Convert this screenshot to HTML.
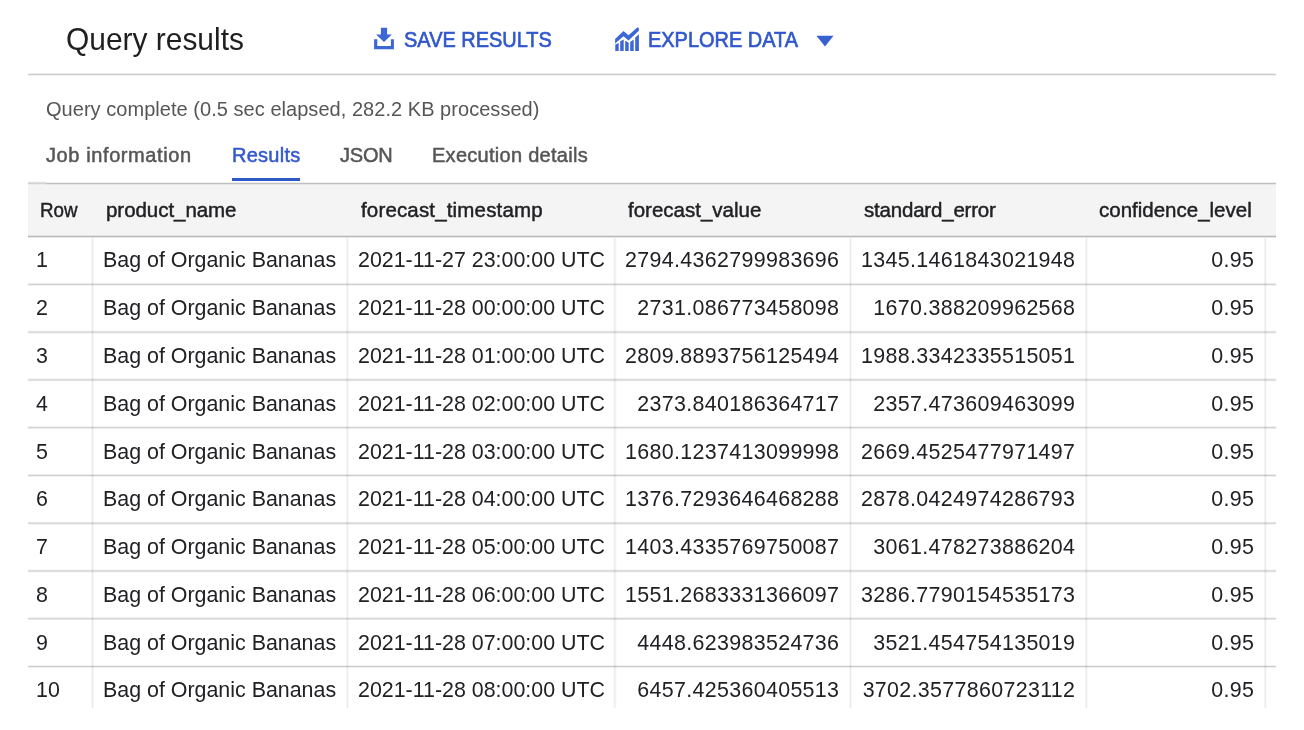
<!DOCTYPE html>
<html><head><meta charset="utf-8"><style>
*{margin:0;padding:0;box-sizing:border-box}
html,body{width:1304px;height:730px;overflow:hidden;background:#fff}
body{position:relative;font-family:"Liberation Sans",sans-serif;color:#202124}
.a{position:absolute;white-space:nowrap}
.m{position:absolute;mix-blend-mode:multiply}
.w{position:absolute;left:0;top:0;width:1304px;height:730px;will-change:transform}
.t{font-size:31.3px;line-height:32px;color:#1f1f1f;transform:scaleX(0.956);transform-origin:0 0}
.btn{font-size:22.8px;line-height:22px;transform:scaleX(0.875);transform-origin:0 0;color:#3358cc;-webkit-text-stroke:0.7px #3358cc}
.sub{font-size:20px;line-height:20px;color:#565656;letter-spacing:0.04px}
.tab{font-size:20px;line-height:20px;color:#565656;-webkit-text-stroke:0.5px #565656}
.tab.on{color:#3358cc;-webkit-text-stroke:0.5px #3358cc}
.hl{position:absolute;background:#dadada}
.vl{position:absolute;background:#e8e8e8;width:1px;box-shadow:1px 0 0 #f3f3f3}
.h{font-size:20.5px;line-height:20px;color:#202124;-webkit-text-stroke:0.45px #202124}
.c{font-size:21.4px;line-height:21px;color:#202124}
.n{letter-spacing:0.34px}
.r{text-align:right}
</style></head>
<body><div class="w">
<div class="a t" style="left:66px;top:24px">Query results</div>
<svg class="a" style="left:372px;top:25px" width="26" height="26" viewBox="0 0 26 26"><path fill="#3d66d6" d="M8.9 2.85H15.1V9.4H19.9L12 17.1L4.1 9.4H8.9Z M2.1 14.2H5.3V21H18.9V14.2H21.9V24.2H2.1Z"/></svg>
<div class="a btn" style="left:404px;top:28.2px">SAVE RESULTS</div>
<svg class="a" style="left:612px;top:25px" width="30" height="28" viewBox="0 0 30 28"><g fill="#3d66d6"><path d="M3.1 14.0L11.5 5.9L16.5 10.2L25.0 2.7Q26.0 2.0 26.9 3.2V5.8L16.5 15.4L11.5 11.3L3.1 18.6Z"/><path d="M3.3 19.6L6.7 18.0V25.9H3.3Z"/><path d="M8.2 16.3L11.7 14.6V25.9H8.2Z"/><path d="M13.2 15.8L16.7 17.8V25.9H13.2Z"/><path d="M18.2 17.0L21.7 14.6V25.9H18.2Z"/><path d="M23.2 12.4L26.9 9.2V25.9H23.2Z"/></g></svg>
<div class="a btn" style="left:648px;top:28.2px">EXPLORE DATA</div>
<svg class="a" style="left:812px;top:32px" width="26" height="18" viewBox="0 0 26 18"><path fill="#3860cf" d="M4.4 3.7H21.5L13 14.5Z"/></svg>
<div class="m" style="left:28px;top:73px;width:1248px;height:1px;background:#ececec"></div>
<div class="m" style="left:28px;top:74px;width:1248px;height:1px;background:#cdcdcd"></div>
<div class="m" style="left:28px;top:75px;width:1248px;height:1px;background:#f1f1f1"></div>
<div class="a sub" style="left:46px;top:99px">Query complete (0.5 sec elapsed, 282.2 KB processed)</div>
<div class="a tab" style="left:46px;top:145px;letter-spacing:0.6px">Job information</div>
<div class="a tab on" style="left:232px;top:145px;letter-spacing:0.25px">Results</div>
<div class="a" style="left:232px;top:178px;width:68px;height:3px;background:#3059c8"></div>
<div class="a tab" style="left:340px;top:145px;letter-spacing:-0.2px">JSON</div>
<div class="a tab" style="left:432px;top:145px;letter-spacing:0.28px">Execution details</div>
<div class="a" style="left:28px;top:183px;width:1248px;height:54px;background:#f4f4f4"></div>
<div class="m" style="left:28px;top:181px;width:18px;height:1px;background:#f9f9f9"></div>
<div class="m" style="left:28px;top:182px;width:18px;height:1px;background:#e0e0e0"></div>
<div class="m" style="left:28px;top:183px;width:18px;height:1px;background:#dcdcdc"></div>
<div class="m" style="left:28px;top:184px;width:18px;height:1px;background:#f7f7f7"></div>
<div class="m" style="left:46px;top:182px;width:1230px;height:1px;background:#f0f0f0"></div>
<div class="m" style="left:46px;top:183px;width:1230px;height:1px;background:#c9c9c9"></div>
<div class="m" style="left:46px;top:184px;width:1230px;height:1px;background:#f0f0f0"></div>
<div class="m" style="left:28px;top:235px;width:1248px;height:1px;background:#eeeeee"></div>
<div class="m" style="left:28px;top:236px;width:1248px;height:1px;background:#c0c0c0"></div>
<div class="m" style="left:28px;top:237px;width:1248px;height:1px;background:#e8e8e8"></div>
<div class="a h" style="left:40px;top:200px;letter-spacing:0px;transform:scaleX(0.915);transform-origin:0 0">Row</div>
<div class="a h" style="left:106px;top:200px;letter-spacing:-0.05px">product_name</div>
<div class="a h" style="left:361px;top:200px;letter-spacing:0.16px">forecast_timestamp</div>
<div class="a h" style="left:628px;top:200px;letter-spacing:0px">forecast_value</div>
<div class="a h" style="left:864px;top:200px;letter-spacing:-0.2px">standard_error</div>
<div class="a h" style="left:1099px;top:200px;letter-spacing:0px">confidence_level</div>
<div class="m" style="left:91px;top:238px;width:1px;height:470px;background:#f9f9f9"></div>
<div class="m" style="left:92px;top:238px;width:1px;height:470px;background:#eaeaea"></div>
<div class="m" style="left:93px;top:238px;width:1px;height:470px;background:#f8f8f8"></div>
<div class="m" style="left:346px;top:238px;width:1px;height:470px;background:#f6f6f6"></div>
<div class="m" style="left:347px;top:238px;width:1px;height:470px;background:#ececec"></div>
<div class="m" style="left:348px;top:238px;width:1px;height:470px;background:#fafafa"></div>
<div class="m" style="left:613px;top:238px;width:1px;height:470px;background:#fbfbfb"></div>
<div class="m" style="left:614px;top:238px;width:1px;height:470px;background:#f0f0f0"></div>
<div class="m" style="left:615px;top:238px;width:1px;height:470px;background:#f2f2f2"></div>
<div class="m" style="left:616px;top:238px;width:1px;height:470px;background:#fcfcfc"></div>
<div class="m" style="left:849px;top:238px;width:1px;height:470px;background:#f9f9f9"></div>
<div class="m" style="left:850px;top:238px;width:1px;height:470px;background:#eaeaea"></div>
<div class="m" style="left:851px;top:238px;width:1px;height:470px;background:#f8f8f8"></div>
<div class="m" style="left:1085px;top:238px;width:1px;height:470px;background:#f5f5f5"></div>
<div class="m" style="left:1086px;top:238px;width:1px;height:470px;background:#ededed"></div>
<div class="m" style="left:1087px;top:238px;width:1px;height:470px;background:#fafafa"></div>
<div class="m" style="left:1264px;top:238px;width:1px;height:470px;background:#f5f5f5"></div>
<div class="m" style="left:1265px;top:238px;width:1px;height:470px;background:#ededed"></div>
<div class="m" style="left:1266px;top:238px;width:1px;height:470px;background:#fafafa"></div>
<div class="m" style="left:28px;top:282px;width:1248px;height:1px;background:#fdfdfd"></div>
<div class="m" style="left:28px;top:283px;width:1248px;height:1px;background:#ebebeb"></div>
<div class="m" style="left:28px;top:284px;width:1248px;height:1px;background:#d1d1d1"></div>
<div class="m" style="left:28px;top:285px;width:1248px;height:1px;background:#f3f3f3"></div>
<div class="m" style="left:28px;top:330px;width:1248px;height:1px;background:#fafafa"></div>
<div class="m" style="left:28px;top:331px;width:1248px;height:1px;background:#e3e3e3"></div>
<div class="m" style="left:28px;top:332px;width:1248px;height:1px;background:#dadada"></div>
<div class="m" style="left:28px;top:333px;width:1248px;height:1px;background:#f6f6f6"></div>
<div class="m" style="left:28px;top:378px;width:1248px;height:1px;background:#f6f6f6"></div>
<div class="m" style="left:28px;top:379px;width:1248px;height:1px;background:#dadada"></div>
<div class="m" style="left:28px;top:380px;width:1248px;height:1px;background:#e2e2e2"></div>
<div class="m" style="left:28px;top:381px;width:1248px;height:1px;background:#f9f9f9"></div>
<div class="m" style="left:28px;top:426px;width:1248px;height:1px;background:#f3f3f3"></div>
<div class="m" style="left:28px;top:427px;width:1248px;height:1px;background:#d2d2d2"></div>
<div class="m" style="left:28px;top:428px;width:1248px;height:1px;background:#ebebeb"></div>
<div class="m" style="left:28px;top:429px;width:1248px;height:1px;background:#fdfdfd"></div>
<div class="m" style="left:28px;top:474px;width:1248px;height:1px;background:#eeeeee"></div>
<div class="m" style="left:28px;top:475px;width:1248px;height:1px;background:#cecece"></div>
<div class="m" style="left:28px;top:476px;width:1248px;height:1px;background:#f2f2f2"></div>
<div class="m" style="left:28px;top:521px;width:1248px;height:1px;background:#fbfbfb"></div>
<div class="m" style="left:28px;top:522px;width:1248px;height:1px;background:#e6e6e6"></div>
<div class="m" style="left:28px;top:523px;width:1248px;height:1px;background:#d7d7d7"></div>
<div class="m" style="left:28px;top:524px;width:1248px;height:1px;background:#f5f5f5"></div>
<div class="m" style="left:28px;top:569px;width:1248px;height:1px;background:#f7f7f7"></div>
<div class="m" style="left:28px;top:570px;width:1248px;height:1px;background:#dddddd"></div>
<div class="m" style="left:28px;top:571px;width:1248px;height:1px;background:#dfdfdf"></div>
<div class="m" style="left:28px;top:572px;width:1248px;height:1px;background:#f8f8f8"></div>
<div class="m" style="left:28px;top:617px;width:1248px;height:1px;background:#f4f4f4"></div>
<div class="m" style="left:28px;top:618px;width:1248px;height:1px;background:#d5d5d5"></div>
<div class="m" style="left:28px;top:619px;width:1248px;height:1px;background:#e8e8e8"></div>
<div class="m" style="left:28px;top:620px;width:1248px;height:1px;background:#fcfcfc"></div>
<div class="m" style="left:28px;top:665px;width:1248px;height:1px;background:#f1f1f1"></div>
<div class="m" style="left:28px;top:666px;width:1248px;height:1px;background:#cccccc"></div>
<div class="m" style="left:28px;top:667px;width:1248px;height:1px;background:#f0f0f0"></div>
<div class="a c" style="left:36px;top:250.48px">1</div>
<div class="a c" style="left:103px;top:250.48px">Bag of Organic Bananas</div>
<div class="a c" style="left:358px;top:250.48px">2021-11-27 23:00:00 UTC</div>
<div class="a c r n" style="right:464.66px;top:250.48px">2794.4362799983696</div>
<div class="a c r n" style="right:228.66px;top:250.48px">1345.1461843021948</div>
<div class="a c r n" style="right:49.66px;top:250.48px">0.95</div>
<div class="a c" style="left:36px;top:298.25px">2</div>
<div class="a c" style="left:103px;top:298.25px">Bag of Organic Bananas</div>
<div class="a c" style="left:358px;top:298.25px">2021-11-28 00:00:00 UTC</div>
<div class="a c r n" style="right:464.66px;top:298.25px">2731.086773458098</div>
<div class="a c r n" style="right:228.66px;top:298.25px">1670.388209962568</div>
<div class="a c r n" style="right:49.66px;top:298.25px">0.95</div>
<div class="a c" style="left:36px;top:346.02px">3</div>
<div class="a c" style="left:103px;top:346.02px">Bag of Organic Bananas</div>
<div class="a c" style="left:358px;top:346.02px">2021-11-28 01:00:00 UTC</div>
<div class="a c r n" style="right:464.66px;top:346.02px">2809.8893756125494</div>
<div class="a c r n" style="right:228.66px;top:346.02px">1988.3342335515051</div>
<div class="a c r n" style="right:49.66px;top:346.02px">0.95</div>
<div class="a c" style="left:36px;top:393.79px">4</div>
<div class="a c" style="left:103px;top:393.79px">Bag of Organic Bananas</div>
<div class="a c" style="left:358px;top:393.79px">2021-11-28 02:00:00 UTC</div>
<div class="a c r n" style="right:464.66px;top:393.79px">2373.840186364717</div>
<div class="a c r n" style="right:228.66px;top:393.79px">2357.473609463099</div>
<div class="a c r n" style="right:49.66px;top:393.79px">0.95</div>
<div class="a c" style="left:36px;top:441.56px">5</div>
<div class="a c" style="left:103px;top:441.56px">Bag of Organic Bananas</div>
<div class="a c" style="left:358px;top:441.56px">2021-11-28 03:00:00 UTC</div>
<div class="a c r n" style="right:464.66px;top:441.56px">1680.1237413099998</div>
<div class="a c r n" style="right:228.66px;top:441.56px">2669.4525477971497</div>
<div class="a c r n" style="right:49.66px;top:441.56px">0.95</div>
<div class="a c" style="left:36px;top:489.33px">6</div>
<div class="a c" style="left:103px;top:489.33px">Bag of Organic Bananas</div>
<div class="a c" style="left:358px;top:489.33px">2021-11-28 04:00:00 UTC</div>
<div class="a c r n" style="right:464.66px;top:489.33px">1376.7293646468288</div>
<div class="a c r n" style="right:228.66px;top:489.33px">2878.0424974286793</div>
<div class="a c r n" style="right:49.66px;top:489.33px">0.95</div>
<div class="a c" style="left:36px;top:537.1px">7</div>
<div class="a c" style="left:103px;top:537.1px">Bag of Organic Bananas</div>
<div class="a c" style="left:358px;top:537.1px">2021-11-28 05:00:00 UTC</div>
<div class="a c r n" style="right:464.66px;top:537.1px">1403.4335769750087</div>
<div class="a c r n" style="right:228.66px;top:537.1px">3061.478273886204</div>
<div class="a c r n" style="right:49.66px;top:537.1px">0.95</div>
<div class="a c" style="left:36px;top:584.87px">8</div>
<div class="a c" style="left:103px;top:584.87px">Bag of Organic Bananas</div>
<div class="a c" style="left:358px;top:584.87px">2021-11-28 06:00:00 UTC</div>
<div class="a c r n" style="right:464.66px;top:584.87px">1551.2683331366097</div>
<div class="a c r n" style="right:228.66px;top:584.87px">3286.7790154535173</div>
<div class="a c r n" style="right:49.66px;top:584.87px">0.95</div>
<div class="a c" style="left:36px;top:632.64px">9</div>
<div class="a c" style="left:103px;top:632.64px">Bag of Organic Bananas</div>
<div class="a c" style="left:358px;top:632.64px">2021-11-28 07:00:00 UTC</div>
<div class="a c r n" style="right:464.66px;top:632.64px">4448.623983524736</div>
<div class="a c r n" style="right:228.66px;top:632.64px">3521.454754135019</div>
<div class="a c r n" style="right:49.66px;top:632.64px">0.95</div>
<div class="a c" style="left:36px;top:680.41px">10</div>
<div class="a c" style="left:103px;top:680.41px">Bag of Organic Bananas</div>
<div class="a c" style="left:358px;top:680.41px">2021-11-28 08:00:00 UTC</div>
<div class="a c r n" style="right:464.66px;top:680.41px">6457.425360405513</div>
<div class="a c r n" style="right:228.66px;top:680.41px">3702.3577860723112</div>
<div class="a c r n" style="right:49.66px;top:680.41px">0.95</div>
</div></body></html>
